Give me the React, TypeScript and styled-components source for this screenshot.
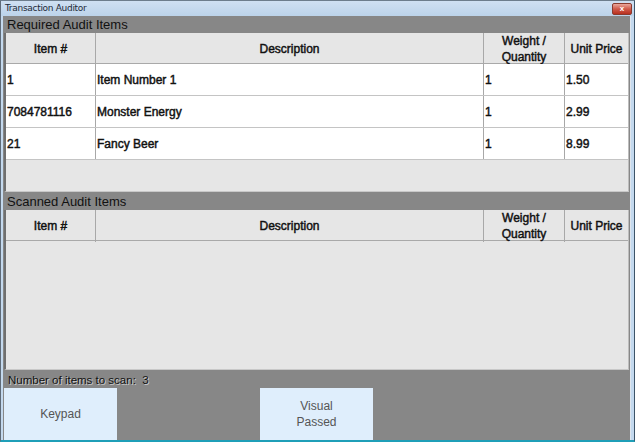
import React from "react";
import styled, { createGlobalStyle } from "styled-components";

const Global = createGlobalStyle`
  html, body { margin: 0; padding: 0; background: #fff; }
  body { font-family: "Liberation Sans", Arial, sans-serif; }
`;

const Window = styled.div`
  width: 635px;
  height: 442px;
  display: flex;
  flex-direction: column;
  box-sizing: border-box;
  background: #c4d9ee;
  border-left: 1px solid #5f6b78;
  border-right: 1px solid #3d5468;
  border-top: 1px solid #6d7d8c;
  border-bottom: 2px solid #1f9fb8;
  overflow: hidden;
`;

const TitleBar = styled.div`
  height: 15px;
  flex: none;
  display: flex;
  align-items: flex-start;
  justify-content: space-between;
  padding: 0 2px 0 4px;
  background: linear-gradient(#cfe0f2, #bcd3ea);
`;

const Title = styled.span`
  font-size: 9px;
  line-height: 14px;
  color: #1e2a38;
  font-family: "DejaVu Sans", "Liberation Sans", sans-serif;
  letter-spacing: -0.3px;
`;

const CloseBtn = styled.div`
  width: 20px;
  height: 12px;
  margin-top: 2px;
  border-radius: 2px;
  border: 1px solid #8a3a2e;
  background: linear-gradient(#eaa79c, #d05a4a 50%, #b8301f);
  display: flex;
  align-items: center;
  justify-content: center;
  color: #fff;
  font-size: 8px;
  font-weight: bold;
  line-height: 1;
  box-sizing: border-box;
`;

const Frame = styled.div`
  flex: 1;
  display: flex;
  padding: 0 3px 0 2px;
  min-height: 0;
`;

const Content = styled.div`
  flex: 1;
  background: #878787;
  display: flex;
  flex-direction: column;
  border-right: 1px solid #dfe6ee;
`;

const SectionTitle = styled.div<{ $h: number }>`
  height: ${(p) => p.$h}px;
  flex: none;
  padding-left: 4px;
  font-size: 13px;
  color: #111;
  display: flex;
  align-items: center;
`;

const Grid = styled.div<{ $h: number }>`
  height: ${(p) => p.$h}px;
  flex: none;
  margin: 0 1px 0 1px;
  background: #e6e6e6;
  border-left: 2px solid #6f6f6f;
  border-right: 1px solid #bdbdbd;
  border-bottom: 1px solid #c8c8c8;
  display: flex;
  flex-direction: column;
  box-sizing: border-box;
`;

const Row = styled.div<{ $head?: boolean }>`
  display: grid;
  grid-template-columns: 90px 388px 81px 1fr;
  height: ${(p) => (p.$head ? 31 : 32)}px;
  flex: none;
  background: ${(p) => (p.$head ? "#e6e6e6" : "#ffffff")};
  border-bottom: 1px solid ${(p) => (p.$head ? "#a9a9a9" : "#c4c4c4")};
  box-sizing: border-box;
`;

const Cell = styled.div<{ $head?: boolean; $last?: boolean }>`
  display: flex;
  align-items: center;
  justify-content: ${(p) => (p.$head ? "center" : "flex-start")};
  text-align: center;
  padding-left: ${(p) => (p.$head ? 0 : 1)}px;
  border-right: ${(p) => (p.$last ? "none" : "1px solid #a8a8a8")};
  font-size: 12px;
  color: #111;
  -webkit-text-stroke: 0.45px #111;
  line-height: 16px;
  white-space: nowrap;
`;

const Footer = styled.div`
  flex: 1;
  display: flex;
  flex-direction: column;
`;

const Count = styled.div`
  height: 18px;
  padding: 2px 0 0 5px;
  box-sizing: border-box;
  font-size: 11.5px;
  color: #111;
  display: flex;
  align-items: center;
  text-shadow: 1px 1px 0 #c9c9c9;
`;

const Buttons = styled.div`
  flex: 1;
  display: flex;
  gap: 143px;
  padding-left: 1px;
`;

const Button = styled.div`
  width: 113px;
  background: #dfeefc;
  color: #555;
  font-size: 12px;
  display: flex;
  align-items: center;
  justify-content: center;
  text-align: center;
  line-height: 16px;
`;

const columns = ["Item #", "Description", "Weight /\nQuantity", "Unit Price"];

const items = [
  ["1", "Item Number 1", "1", "1.50"],
  ["7084781116", "Monster Energy", "1", "2.99"],
  ["21", "Fancy Beer", "1", "8.99"],
];

const HeaderRow = () => (
  <Row $head>
    {columns.map((c, i) => (
      <Cell key={i} $head $last={i === 3}>
        {c.split("\n").map((l, j) => (
          <React.Fragment key={j}>
            {j > 0 && <br />}
            {l}
          </React.Fragment>
        ))}
      </Cell>
    ))}
  </Row>
);

export default function App() {
  return (
    <>
      <Global />
      <Window>
        <TitleBar>
          <Title>Transaction Auditor</Title>
          <CloseBtn>x</CloseBtn>
        </TitleBar>
        <Frame>
          <Content>
            <SectionTitle $h={17}>Required Audit Items</SectionTitle>
            <Grid $h={159}>
              <HeaderRow />
              {items.map((r, i) => (
                <Row key={i}>
                  {r.map((v, j) => (
                    <Cell key={j} $last={j === 3}>
                      {v}
                    </Cell>
                  ))}
                </Row>
              ))}
            </Grid>
            <SectionTitle $h={18}>Scanned Audit Items</SectionTitle>
            <Grid $h={160}>
              <HeaderRow />
            </Grid>
            <Footer>
              <Count>Number of items to scan:&nbsp; 3</Count>
              <Buttons>
                <Button>Keypad</Button>
                <Button>
                  Visual
                  <br />
                  Passed
                </Button>
              </Buttons>
            </Footer>
          </Content>
        </Frame>
      </Window>
    </>
  );
}
